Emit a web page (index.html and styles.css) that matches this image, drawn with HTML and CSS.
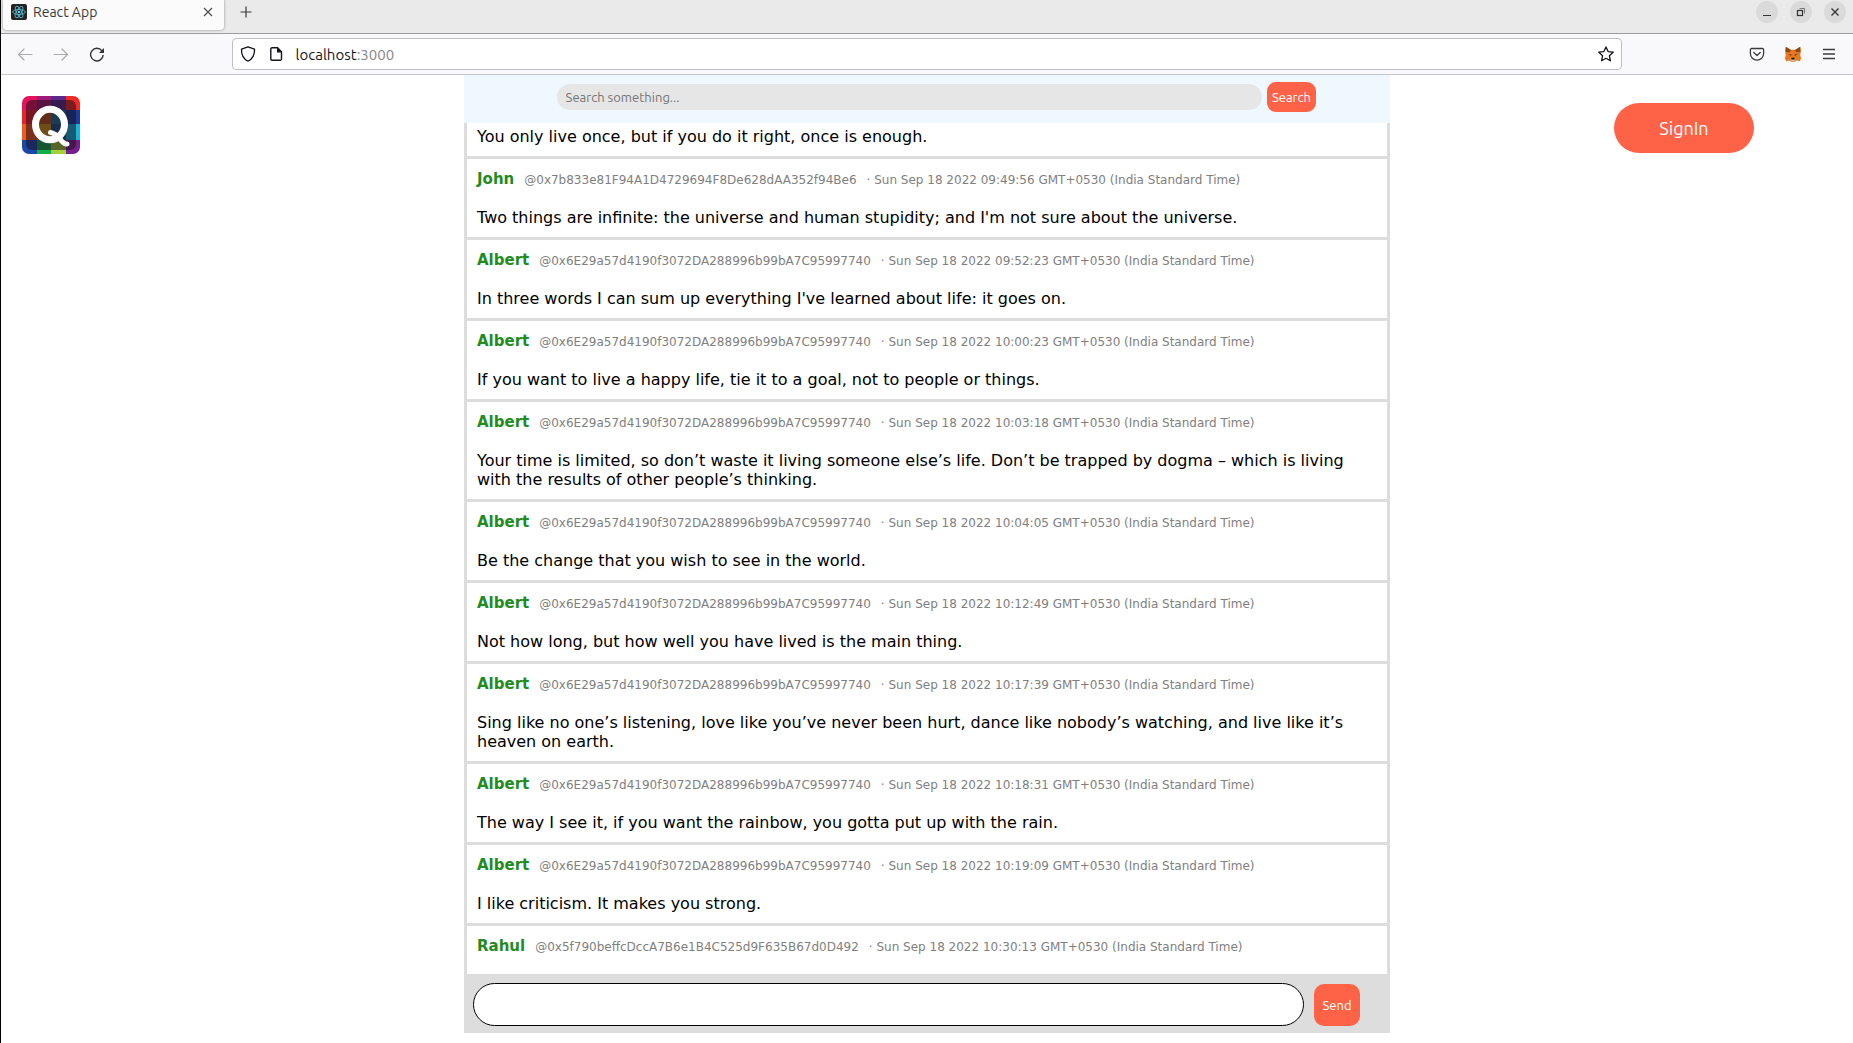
FILE: index.html
```html
<!DOCTYPE html>
<html lang="en">
<head>
<meta charset="utf-8">
<title>React App</title>
<link rel="stylesheet" href="styles.css">
</head>
<body>
<header class="browser">
  <div class="tabs">
    <div class="tab">
      <svg class="favicon" width="16" height="16" viewBox="0 0 16 16"><rect width="16" height="16" rx="2" fill="#222"/><g fill="none" stroke="#53b4cc" stroke-width=".9"><ellipse cx="8" cy="8" rx="6.3" ry="2.5"/><ellipse cx="8" cy="8" rx="6.3" ry="2.5" transform="rotate(60 8 8)"/><ellipse cx="8" cy="8" rx="6.3" ry="2.5" transform="rotate(120 8 8)"/></g><circle cx="8" cy="8" r="1.2" fill="#61dafb"/></svg>
      <span class="tab-title">React App</span>
      <button class="icon-btn tab-close" aria-label="Close tab"><svg width="10" height="10" viewBox="0 0 10 10"><path d="M1 1l8 8M9 1L1 9" stroke="#4a4a4f" stroke-width="1.1"/></svg></button>
    </div>
    <button class="icon-btn" aria-label="New tab"><svg width="12" height="12" viewBox="0 0 12 12"><path d="M6 .5v11M.5 6h11" stroke="#3a3a3f" stroke-width="1.2"/></svg></button>
    <div class="window-controls">
      <button class="win-btn" aria-label="Minimize"><svg width="22" height="22"><path d="M7 14.5h8" stroke="#333"/></svg></button>
      <button class="win-btn" aria-label="Restore"><svg width="22" height="22" fill="none"><rect x="7.5" y="9.5" width="5" height="5" stroke="#333" stroke-width="1.2"/><path d="M9.500 7.500h5v5" stroke="#777"/></svg></button>
      <button class="win-btn" aria-label="Close"><svg width="22" height="22"><path d="M7.500 7.500l7 7M14.500 7.500l-7 7" stroke="#333" stroke-width="1.300"/></svg></button>
    </div>
  </div>
  <div class="toolbar">
    <button class="icon-btn" aria-label="Back"><svg width="16" height="16" viewBox="0 0 16 16" fill="none" stroke="#ababaf" stroke-width="1.200" stroke-linecap="round" stroke-linejoin="round"><path d="M15 8.500H1.500M7 3L1.500 8.500 7 14"/></svg></button>
    <button class="icon-btn" aria-label="Forward"><svg width="16" height="16" viewBox="0 0 16 16" fill="none" stroke="#ababaf" stroke-width="1.200" stroke-linecap="round" stroke-linejoin="round"><path d="M1 8.500h13.500M9 3l5.500 5.500L9 14"/></svg></button>
    <button class="icon-btn" aria-label="Reload"><svg width="16" height="16" viewBox="0 0 16 16" fill="none" stroke="#333338" stroke-width="1.400"><path d="M13 4.900A6.300 6.300 0 1 0 14.200 9"/><path d="M15 2v5H10z" fill="#333338" stroke="none"/></svg></button>
    <div class="spacer"></div>
    <div class="urlbar">
      <svg width="16" height="16" viewBox="0 0 16 16" fill="none" stroke="#15141a" stroke-width="1.300" stroke-linejoin="round"><path d="M8 .8L14.500 3.200C14.800 9 12.500 12.800 8 15.200 3.500 12.800 1.200 9 1.500 3.200z"/></svg>
      <svg width="16" height="16" viewBox="0 0 16 16"><path d="M4 1.800h5.500l4 4V13a1.200 1.200 0 0 1-1.200 1.200H4A1.200 1.200 0 0 1 2.800 13V3A1.200 1.200 0 0 1 4 1.800z" fill="none" stroke="#15141a" stroke-width="1.400"/><path d="M9 1.500V6.500h5z" fill="#15141a"/></svg>
      <span class="url">localhost<span class="port">:3000</span></span>
      <svg width="16" height="16" viewBox="0 0 16 16" fill="none" stroke="#15141a" stroke-width="1.300" stroke-linejoin="round"><path d="M8 .9l2.100 4.700 5.100.6-3.800 3.500 1 5.100L8 12.300l-4.400 2.500 1-5.100L.8 6.200l5.100-.6z"/></svg>
    </div>
    <div class="spacer"></div>
    <button class="icon-btn" aria-label="Save to Pocket"><svg width="16" height="16" viewBox="0 0 16 16" fill="none" stroke="#3a3a40" stroke-width="1.300" stroke-linecap="round" stroke-linejoin="round"><path d="M2.600 2.500h10.800a1.200 1.200 0 0 1 1.200 1.200V7.500a6.600 6.600 0 0 1-13.200 0V3.700A1.200 1.200 0 0 1 2.600 2.500z"/><path d="M4.800 6.500L8 9.500l3.200-3"/></svg></button>
    <button class="icon-btn" aria-label="MetaMask"><svg width="16" height="16" viewBox="0 0 16 16"><path d="M.8.8L6.200 3.800h3.600L15.200.8 16 5l-.8 4 .8 3-1 3.200-3-.7-2.200 1.300H6.200L4 14.500l-3 .7L0 12l.8-3L0 5z" fill="#e8781e"/><path d="M.8.800L6.200 4.500 4.500 6.200.8 6zM15.200.8L9.800 4.500l1.700 1.700 3.700-.2z" fill="#8a4a1c"/><path d="M3.500 7.800l3 .8-.5 1.500zM12.500 7.800l-3 .8.5 1.500z" fill="#5a3418"/><path d="M6 12h4l.5 3H5.500z" fill="#d5bfb2"/><path d="M6.500 11.800h3l.4 1.800H6.100z" fill="#161616"/></svg></button>
    <button class="icon-btn" aria-label="Menu"><svg width="14" height="16" viewBox="0 0 14 16"><path d="M1 3.500h12M1 8h12M1 12.500h12" stroke="#3a3a40" stroke-width="1.300"/></svg></button>
  </div>
</header>
<div class="app">
  <aside class="left">
    <svg class="logo" width="58" height="58" viewBox="0 0 58 58" role="img" aria-label="Q logo">
      <defs><clipPath id="tile"><rect width="58" height="58" rx="7"/></clipPath></defs>
      <g clip-path="url(#tile)">
        <path fill="#e5125c" d="M0 0h15v14H0z"/><path fill="#a01b78" d="M15 0h14v14H15z"/><path fill="#5b2a8c" d="M29 0h15v14H29z"/><path fill="#ee2b24" d="M44 0h14v14H44z"/>
        <path fill="#ea222c" d="M0 14h15v14H0z"/><path fill="#b8501c" d="M15 14h14v14H15z"/><path fill="#16789a" d="M29 14h15v14H29z"/><path fill="#1c3c9c" d="M44 14h14v14H44z"/>
        <path fill="#f15a22" d="M0 28h15v16H0z"/><path fill="#d59a10" d="M15 28h14v16H15z"/><path fill="#12588c" d="M29 28h15v16H29z"/><path fill="#15b5e0" d="M44 28h14v16H44z"/>
        <path fill="#1b48a8" d="M0 44h15v14H0z"/><path fill="#12ae4a" d="M15 44h14v14H15z"/><path fill="#a4cf3a" d="M29 44h15v14H29z"/><path fill="#75208c" d="M44 44h14v14H44z"/>
        <rect x="4" y="4" width="50" height="50" rx="6" fill="#1a0e1c" fill-opacity=".55"/>
      </g>
      <ellipse cx="28" cy="28.500" rx="14.500" ry="15.200" fill="none" stroke="#fff" stroke-width="7"/>
      <path d="M28.500 36.500Q34 37.500 38 43T45 48" fill="none" stroke="#fff" stroke-width="5" stroke-linecap="round"/>
    </svg>
  </aside>
  <main class="feed">
    <form class="search">
      <input class="search-input" type="text" placeholder="Search something..." aria-label="Search">
      <button class="search-btn" type="button">Search</button>
    </form>
    <section class="posts">
      <article class="post continued"><p class="text">You only live once, but if you do it right, once is enough.</p></article>
      <article class="post"><div class="meta"><span class="name">John</span><span>@0x7b833e81F94A1D4729694F8De628dAA352f94Be6</span><span>· Sun Sep 18 2022 09:49:56 GMT+0530 (India Standard Time)</span></div><p class="text">Two things are infinite: the universe and human stupidity; and I'm not sure about the universe.</p></article>
      <article class="post"><div class="meta"><span class="name">Albert</span><span>@0x6E29a57d4190f3072DA288996b99bA7C95997740</span><span>· Sun Sep 18 2022 09:52:23 GMT+0530 (India Standard Time)</span></div><p class="text">In three words I can sum up everything I've learned about life: it goes on.</p></article>
      <article class="post"><div class="meta"><span class="name">Albert</span><span>@0x6E29a57d4190f3072DA288996b99bA7C95997740</span><span>· Sun Sep 18 2022 10:00:23 GMT+0530 (India Standard Time)</span></div><p class="text">If you want to live a happy life, tie it to a goal, not to people or things.</p></article>
      <article class="post"><div class="meta"><span class="name">Albert</span><span>@0x6E29a57d4190f3072DA288996b99bA7C95997740</span><span>· Sun Sep 18 2022 10:03:18 GMT+0530 (India Standard Time)</span></div><p class="text">Your time is limited, so don’t waste it living someone else’s life. Don’t be trapped by dogma – which is living with the results of other people’s thinking.</p></article>
      <article class="post"><div class="meta"><span class="name">Albert</span><span>@0x6E29a57d4190f3072DA288996b99bA7C95997740</span><span>· Sun Sep 18 2022 10:04:05 GMT+0530 (India Standard Time)</span></div><p class="text">Be the change that you wish to see in the world.</p></article>
      <article class="post"><div class="meta"><span class="name">Albert</span><span>@0x6E29a57d4190f3072DA288996b99bA7C95997740</span><span>· Sun Sep 18 2022 10:12:49 GMT+0530 (India Standard Time)</span></div><p class="text">Not how long, but how well you have lived is the main thing.</p></article>
      <article class="post"><div class="meta"><span class="name">Albert</span><span>@0x6E29a57d4190f3072DA288996b99bA7C95997740</span><span>· Sun Sep 18 2022 10:17:39 GMT+0530 (India Standard Time)</span></div><p class="text">Sing like no one’s listening, love like you’ve never been hurt, dance like nobody’s watching, and live like it’s heaven on earth.</p></article>
      <article class="post"><div class="meta"><span class="name">Albert</span><span>@0x6E29a57d4190f3072DA288996b99bA7C95997740</span><span>· Sun Sep 18 2022 10:18:31 GMT+0530 (India Standard Time)</span></div><p class="text">The way I see it, if you want the rainbow, you gotta put up with the rain.</p></article>
      <article class="post"><div class="meta"><span class="name">Albert</span><span>@0x6E29a57d4190f3072DA288996b99bA7C95997740</span><span>· Sun Sep 18 2022 10:19:09 GMT+0530 (India Standard Time)</span></div><p class="text">I like criticism. It makes you strong.</p></article>
      <article class="post last"><div class="meta"><span class="name">Rahul</span><span>@0x5f790beffcDccA7B6e1B4C525d9F635B67d0D492</span><span>· Sun Sep 18 2022 10:30:13 GMT+0530 (India Standard Time)</span></div></article>
    </section>
    <form class="composer">
      <input class="message" type="text" aria-label="Message">
      <button class="send" type="button">Send</button>
    </form>
  </main>
  <aside class="right"><button class="signin" type="button">SignIn</button></aside>
</div>
</body>
</html>
```
FILE: styles.css
```css
* { box-sizing: border-box; }
body {
  margin: 0;
  height: 100vh;
  display: flex;
  flex-direction: column;
  border-left: 1px solid #000;
  background: #fff;
  font-family: "DejaVu Sans", sans-serif;
  font-size: 16px;
  line-height: 19px;
  overflow: hidden;
}
button, input { font-family: Ubuntu, "Noto Sans", sans-serif; }
button { border: 0; padding: 0; color: #fff; background: tomato; cursor: pointer; }

.browser { font-family: Ubuntu, "Noto Sans", sans-serif; flex: none; }
.tabs {
  height: 34px;
  display: flex;
  background: #eaeaea;
  border-bottom: 1px solid #9c9c9f;
  padding: 0 7px 0 2px;
}
.tab {
  width: 221px;
  height: 30px;
  display: flex;
  align-items: center;
  gap: 6px;
  padding: 0 2px 6px 8px;
  background: #fbfbfb;
  border-radius: 0 0 4px 4px;
  box-shadow: 0 0 3px rgba(0, 0, 0, .4);
}
.tab-title { flex: 1; font-size: 14px; color: #3a3a40; }
.icon-btn {
  width: 36px;
  height: 24px;
  display: flex;
  align-items: center;
  justify-content: center;
  background: none;
}
.tab .tab-close { width: 28px; }
.tabs > .icon-btn { margin-left: 4px; }
.window-controls { margin-left: auto; display: flex; gap: 12px; padding-top: 1px; }
.win-btn { width: 22px; height: 22px; border-radius: 50%; background: #dadada; }
.win-btn svg { display: block; }
.toolbar {
  height: 41px;
  display: flex;
  align-items: center;
  padding: 0 6px;
  background: #f9f9fb;
  border-bottom: 1px solid #c6c6c8;
}
.spacer { flex: 1; }
.urlbar {
  flex: 12;
  height: 32px;
  display: flex;
  align-items: center;
  gap: 12px;
  margin: 0 2px;
  padding: 0 7px;
  background: #fff;
  border: 1px solid #bfbfc2;
  border-radius: 4px;
}
.url { flex: 1; font-size: 15px; color: #15141a; }
.port { color: #86868a; }

.app {
  flex: 1;
  min-height: 0;
  display: grid;
  grid-template-columns: 1fr 2fr 1fr;
  grid-template-rows: minmax(0, 1fr);
  padding-bottom: 10px;
}
.left { padding: 21px; }
.logo { display: block; }
.right { padding: 28px 99px; display: flex; justify-content: flex-end; align-items: flex-start; }
.signin { width: 140px; height: 50px; border-radius: 25px; font-size: 18px; }

.feed { display: flex; flex-direction: column; min-width: 0; }
.search {
  flex: none;
  height: 48px;
  display: flex;
  align-items: flex-start;
  gap: 5px;
  padding: 7px 8% 0 10%;
  background: aliceblue;
}
.search-input {
  flex: 1;
  height: 26px;
  margin-top: 2px;
  padding: 0 9px;
  border: 0;
  border-radius: 13px;
  background: #e6e6e6;
  font-size: 13px;
}
.search-input::placeholder { color: #757575; }
.search-btn { width: 49px; height: 30px; border-radius: 9px; font-size: 13px; }

.posts { flex: 1; min-height: 0; overflow: hidden; border: solid #ddd; border-width: 0 3px; }
.post { padding: 10px; border-bottom: 3px solid #ddd; }
.continued { padding-top: 4px; }
.last { border-bottom: 0; }
.meta { display: flex; align-items: baseline; gap: 10px; padding-top: 1px; height: 20px; font-size: 12px; color: gray; white-space: nowrap; }
.name { font-size: 15px; font-weight: bold; color: forestgreen; }
.text { margin: 0; }
.meta + .text { margin-top: 19px; }

.composer {
  flex: none;
  display: flex;
  align-items: center;
  gap: 10px;
  padding: 9px 30px 7px 9px;
  background: #ddd;
}
.message { flex: 1; height: 43px; padding: 0 20px; border: 1px solid #000; border-radius: 22px; background: #fff; font-size: 16px; }
.send { width: 46px; height: 42px; border-radius: 10px; font-size: 13px; }
```
